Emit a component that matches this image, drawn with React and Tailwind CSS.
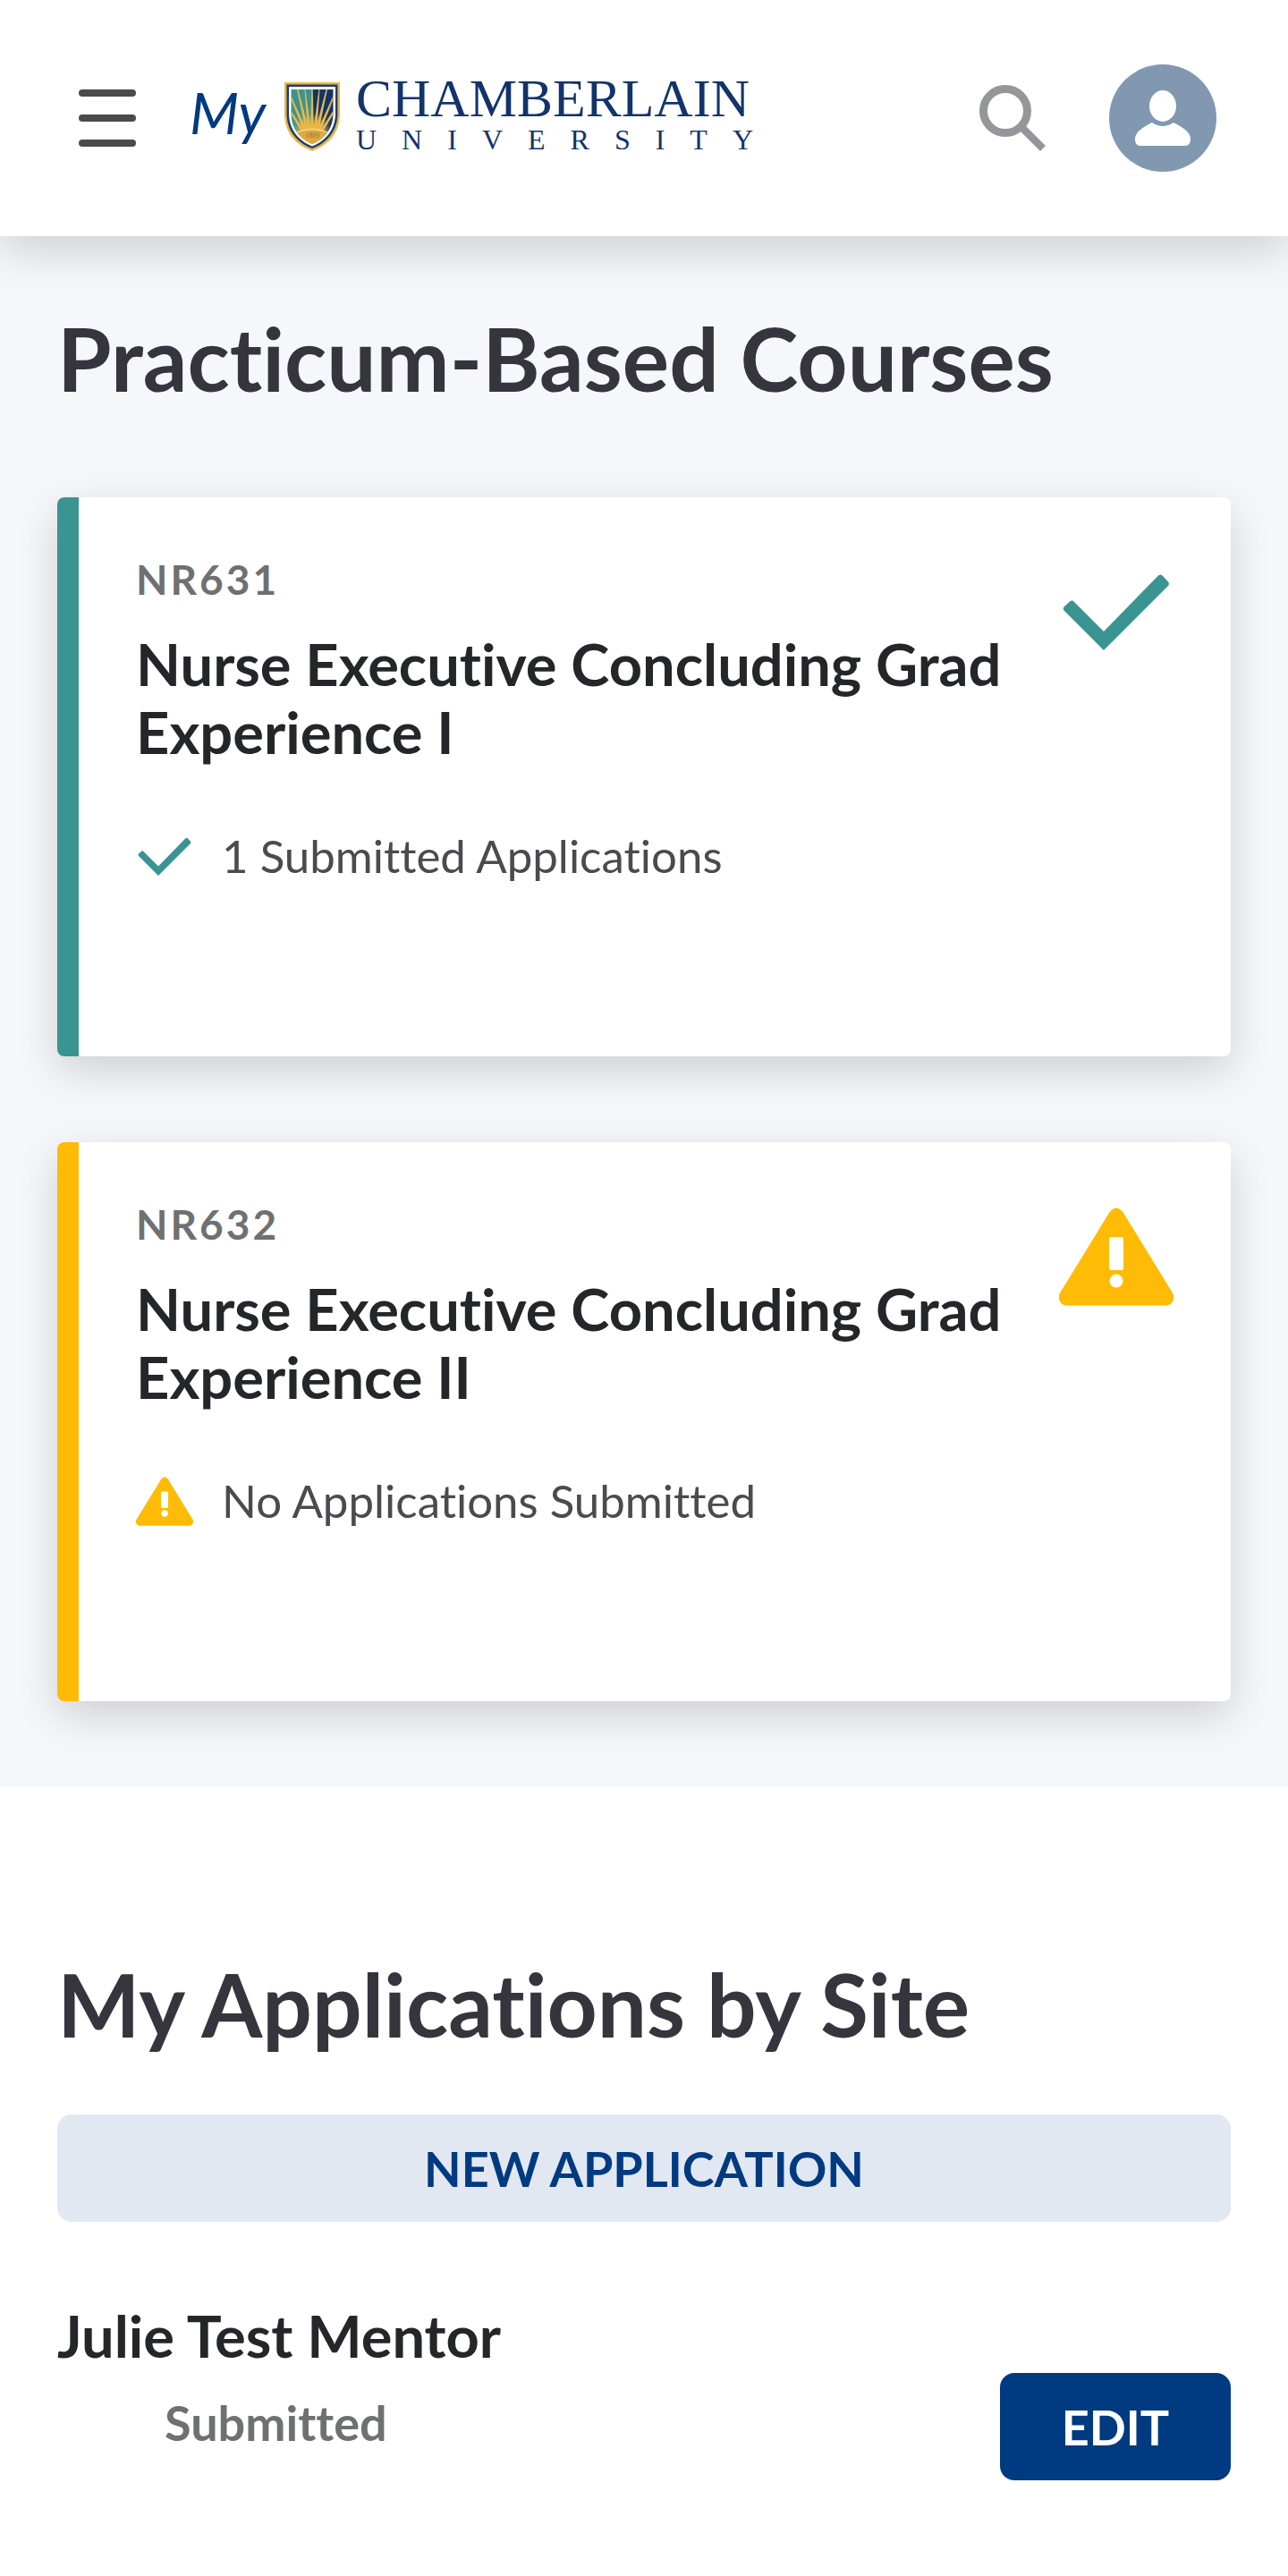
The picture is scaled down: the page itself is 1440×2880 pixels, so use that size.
const courses = [
  {
    code: "NR631",
    title: "Nurse Executive Concluding Grad Experience I",
    status: "1 Submitted Applications",
    complete: true,
  },
  {
    code: "NR632",
    title: "Nurse Executive Concluding Grad Experience II",
    status: "No Applications Submitted",
    complete: false,
  },
];

const applications = [{ id: 1, mentor: "Julie Test Mentor", status: "Submitted" }];

function CheckIcon({ className }) {
  return (
    <svg viewBox="0 0 128 110" className={className} fill="#3a9492" aria-hidden="true">
      <path d="M6 49 L12 43.500 Q14.500 41.500 17 44 L50 77 L110 15.500 Q113 12 116 15 L122 21.500 Q124 24 121.500 26.500 L50 98 L6 54 Q3.500 51.500 6 49Z" />
    </svg>
  );
}

function WarningIcon({ className }) {
  return (
    <svg viewBox="0 0 128 110" className={className} aria-hidden="true">
      <path
        d="M56 6 Q64 -5 72 6 L126 94 Q130 100 127 105 Q125 109 120 109.500 H8 Q3 109 1 105 Q-2 100 2 94Z"
        fill="#ffbb05"
      />
      <rect x="56" y="33" width="16" height="37" rx="2" fill="#fff" />
      <circle cx="64" cy="82" r="7.500" fill="#fff" />
    </svg>
  );
}

function Shield() {
  return (
    <svg viewBox="0 0 62 77" className="h-[77px] w-[62px]" aria-hidden="true">
      <defs>
        <clipPath id="shield-face">
          <path d="M7.500 8H54.500V34C54.500 52 45 63 31 69C17 63 7.500 52 7.500 34Z" />
        </clipPath>
        <radialGradient id="shield-glow" gradientUnits="userSpaceOnUse" cx="31" cy="60" r="24">
          <stop offset="0.400" stopColor="#e9b748" />
          <stop offset="1" stopColor="#e9b748" stopOpacity="0" />
        </radialGradient>
      </defs>
      <path d="M0 0H62V35C62 57 49 70 31 77C13 70 0 57 0 35Z" fill="#e9b748" />
      <path d="M2.500 2.500H59.500V35C59.500 55 47 68 31 74C15 68 2.500 55 2.500 35Z" fill="#1f3f73" />
      <path d="M5 5H57V34.500C57 53 46 65.500 31 71.500C16 65.500 5 53 5 34.500Z" fill="#fff" />
      <g clipPath="url(#shield-face)">
        <rect x="7" y="7" width="24" height="64" fill="#3a9492" />
        <rect x="31" y="7" width="24" height="64" fill="#12346c" />
        <rect x="7" y="30" width="48" height="41" fill="url(#shield-glow)" />
        <g fill="#e9b748">
          <path d="M29 56L30.300 8H31.700L33 56Z" />
          <path d="M26 56L22.500 8H23.500L30 56Z" />
          <path d="M24 56L14 8H15.500L28 56Z" />
          <path d="M22 56L7 18V14L26 56Z" />
          <path d="M20 57L7 35V31L24 57Z" />
          <path d="M36 56L39.500 8H38.500L32 56Z" />
          <path d="M38 56L48 8H46.500L34 56Z" />
          <path d="M40 56L55 18V14L36 56Z" />
          <path d="M42 57L55 35V31L38 57Z" />
        </g>
        <path d="M7 59Q31 47 55 59V72H7Z" fill="#e2a93a" />
        <path d="M13 56Q31 49 49 56" fill="none" stroke="#fbe9bd" strokeWidth="1" />
        <text x="31" y="62" textAnchor="middle" fontSize="8" fontFamily="Liberation Serif, serif" fill="#7c7a5c">
          1889
        </text>
      </g>
    </svg>
  );
}

function Header() {
  return (
    <header className="relative flex h-66 items-center justify-between bg-white pr-20 pl-22 shadow-[0_16px_48px_rgba(0,0,0,0.16)]">
      <div className="flex items-center">
        <button type="button" aria-label="Open menu" className="flex w-16 flex-col gap-5">
          <span className="h-2 rounded-full bg-[#4a4a4f]" />
          <span className="h-2 rounded-full bg-[#4a4a4f]" />
          <span className="h-2 rounded-full bg-[#4a4a4f]" />
        </button>
        <a href="#home" className="mb-1 ml-15 flex items-center">
          <span className="w-[106px] pb-2 text-[64px] leading-[76px] text-[#003a80] italic">My</span>
          <Shield />
          <span className="ml-[18px] flex flex-col font-['Liberation_Serif',serif] text-[#12346c]">
            <span className="text-[60px] leading-[52px]">CHAMBERLAIN</span>
            <span className="text-[32px] leading-10 tracking-[28px]">UNIVERSITY</span>
          </span>
        </a>
      </div>
      <div className="flex items-center gap-[70px]">
        <button type="button" aria-label="Search">
          <svg viewBox="0 0 76 76" className="size-[76px]" fill="none" stroke="#959699" aria-hidden="true">
            <circle cx="30" cy="30" r="24.500" strokeWidth="9" />
            <path d="M48 48L72 72" strokeWidth="8.500" />
          </svg>
        </button>
        <button type="button" aria-label="My profile" className="size-30 rounded-full bg-[#8198b0]">
          <svg viewBox="0 0 120 120" fill="#fff" aria-hidden="true">
            <ellipse cx="60" cy="46.500" rx="15" ry="17.500" />
            <path d="M48 65Q60 73 72 65C82 70 91 76 91 83Q91 91 85 91H35Q29 91 29 83C29 76 38 70 48 65Z" />
          </svg>
        </button>
      </div>
    </header>
  );
}

function CourseCard({ course }) {
  const Icon = course.complete ? CheckIcon : WarningIcon;

  return (
    <article
      className={`flex items-start justify-between gap-8 rounded-lg border-l-24 bg-white px-16 pt-15 pb-47 shadow-[0_16px_48px_rgba(0,0,0,0.16)] ${
        course.complete ? "border-[#3a9492]" : "border-[#ffbb05]"
      }`}
    >
      <div>
        <p className="text-[46px] leading-16 font-bold tracking-[3px] text-[#6f7072]">{course.code}</p>
        <h2 className="mt-6 text-[65px] leading-[76px] font-bold text-[#25262a]">{course.title}</h2>
        <p className="mt-[65px] flex items-center gap-8 text-[51px] leading-[72px] text-[#4a4a4f]">
          <Icon className="w-16" />
          {course.status}
        </p>
      </div>
      <Icon className="mt-[13px] w-32 shrink-0" />
    </article>
  );
}

function App() {
  return (
    <div className="min-h-screen bg-white font-['Lato',sans-serif] [font-variant-ligatures:none]">
      <Header />
      <main>
        <section className="bg-[#f5f7fb] px-16 pt-[76px] pb-24">
          <h1 className="text-[98px] leading-[120px] font-bold text-[#36353e]">Practicum-Based Courses</h1>
          <div className="mt-24 flex flex-col gap-24">
            {courses.map((course) => (
              <CourseCard key={course.code} course={course} />
            ))}
          </div>
        </section>

        <section className="px-16 pt-[182px] pb-20">
          <h1 className="text-[98px] leading-[120px] font-bold text-[#36353e]">My Applications by Site</h1>
          <button
            type="button"
            className="mt-16 h-30 w-full rounded-2xl bg-[#e1e8f2] text-[54px] font-bold text-[#003a80]"
          >
            NEW APPLICATION
          </button>
          {applications.map((application) => (
            <article key={application.id} className="mt-[89px]">
              <h2 className="text-[65px] leading-[76px] font-bold text-[#25262a]">{application.mentor}</h2>
              <div className="mt-1 flex items-start justify-between">
                <p className="mt-5 pl-30 text-[54px] leading-[72px] font-bold text-[#6f7072]">
                  {application.status}
                </p>
                <button
                  type="button"
                  className="h-30 w-[258px] rounded-2xl bg-[#003a80] text-[54px] font-bold text-white"
                >
                  EDIT
                </button>
              </div>
            </article>
          ))}
        </section>
      </main>
    </div>
  );
}

export default App;
